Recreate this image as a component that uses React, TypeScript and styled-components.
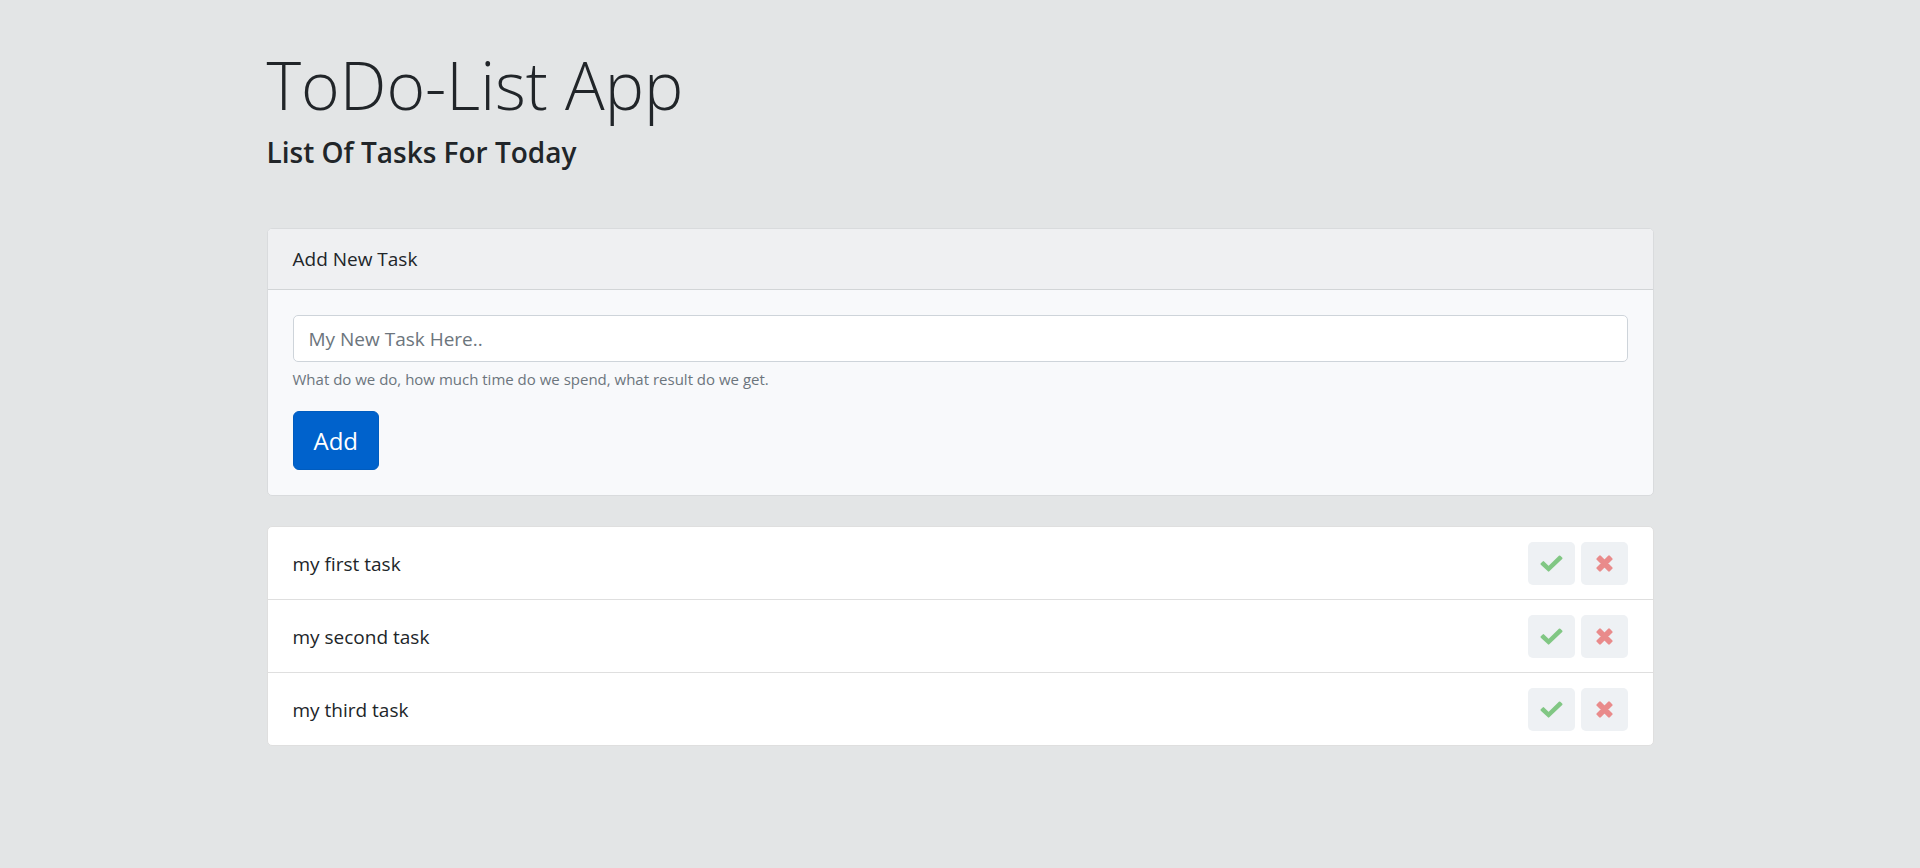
import React, { useState } from "react";
import styled, { createGlobalStyle } from "styled-components";

const GlobalStyle = createGlobalStyle`
  *, *::before, *::after { box-sizing: border-box; }
  body {
    margin: 0;
    background: #e3e5e6;
    color: #212529;
    font-family: "Segoe UI", "Open Sans", "Noto Sans", sans-serif;
    font-size: 19px;
    line-height: 30px;
  }
`;

const Container = styled.main`
  width: 100%;
  max-width: 1427px;
  margin: 0 auto;
  padding: 42px 20px;
`;

const Title = styled.h1`
  margin: 0 0 8px;
  font-size: 66px;
  font-weight: 300;
  line-height: 84px;
`;

const Subtitle = styled.h2`
  margin: 0 0 58px;
  font-size: 28px;
  font-weight: 600;
  line-height: 36px;
`;

const Card = styled.section`
  margin-bottom: 30px;
  background: #f8f9fb;
  border: 1px solid #d9dbdd;
  border-radius: 5px;
  overflow: hidden;
`;

const CardHeader = styled.header`
  padding: 15px 25px;
  background: #eff0f2;
  border-bottom: 1px solid #d2d5d7;
`;

const Form = styled.form`
  display: flex;
  flex-direction: column;
  align-items: flex-start;
  padding: 25px;
`;

const TaskInput = styled.input`
  width: 100%;
  height: 47px;
  padding: 0 15px;
  font: inherit;
  color: #495057;
  background: #fff;
  border: 1px solid #ced4da;
  border-radius: 5px;

  &::placeholder {
    color: #6c757d;
    opacity: 1;
  }
`;

const Hint = styled.small`
  margin: 5px 0 20px;
  color: #6c757d;
  font-size: 15px;
  line-height: 24px;
`;

const AddButton = styled.button`
  padding: 10px 20px;
  font: inherit;
  font-size: 24px;
  line-height: 37px;
  color: #fff;
  background: #0062cc;
  border: 1px solid #005cbf;
  border-radius: 6px;
  cursor: pointer;
`;

const TaskList = styled.ul`
  margin: 0;
  padding: 0;
  list-style: none;
  background: #fff;
  border: 1px solid #dfdfdf;
  border-radius: 5px;
`;

const TaskRow = styled.li`
  display: flex;
  align-items: center;
  gap: 6px;
  padding: 15px 25px 14px;

  & + & {
    border-top: 1px solid #dfdfdf;
  }
`;

const TaskText = styled.span<{ $done: boolean }>`
  flex: 1;
  text-decoration: ${(p) => (p.$done ? "line-through" : "none")};
`;

const IconButton = styled.button<{ $color: string }>`
  display: flex;
  align-items: center;
  justify-content: center;
  width: 47px;
  height: 43px;
  padding: 0;
  color: ${(p) => p.$color};
  background: #eef1f4;
  border: 0;
  border-radius: 5px;
  cursor: pointer;
`;

const CheckIcon = () => (
  <svg width="23" height="17" viewBox="0 0 23 17" fill="currentColor" stroke="currentColor" strokeWidth="2" strokeLinejoin="round" aria-hidden="true">
    <path d="M1.5 9 3.4 7.1 8.6 12.1 19.6 1.5 21.5 3.3 8.6 15.6Z" />
  </svg>
);

const CrossIcon = () => (
  <svg width="17" height="17" viewBox="0 0 17 17" fill="currentColor" stroke="currentColor" strokeWidth="2.4" strokeLinejoin="round" aria-hidden="true">
    <path d="M1.6 4 4 1.6 8.5 6.1 13 1.6 15.4 4 10.9 8.5 15.4 13 13 15.4 8.5 10.9 4 15.4 1.6 13 6.1 8.5Z" />
  </svg>
);

type Task = { id: number; text: string; done: boolean };

export default function App() {
  const [draft, setDraft] = useState("");
  const [tasks, setTasks] = useState<Task[]>([
    { id: 1, text: "my first task", done: false },
    { id: 2, text: "my second task", done: false },
    { id: 3, text: "my third task", done: false },
  ]);

  const add = (e: React.FormEvent) => {
    e.preventDefault();
    if (!draft.trim()) return;
    setTasks([...tasks, { id: Date.now(), text: draft.trim(), done: false }]);
    setDraft("");
  };

  return (
    <>
      <GlobalStyle />
      <Container>
        <Title>ToDo-List App</Title>
        <Subtitle>List Of Tasks For Today</Subtitle>
        <Card>
          <CardHeader>
            <label htmlFor="task">Add New Task</label>
          </CardHeader>
          <Form onSubmit={add}>
            <TaskInput
              id="task"
              type="text"
              placeholder="My New Task Here.."
              aria-describedby="task-hint"
              value={draft}
              onChange={(e) => setDraft(e.target.value)}
            />
            <Hint id="task-hint">What do we do, how much time do we spend, what result do we get.</Hint>
            <AddButton type="submit">Add</AddButton>
          </Form>
        </Card>
        <TaskList>
          {tasks.map((task) => (
            <TaskRow key={task.id}>
              <TaskText $done={task.done}>{task.text}</TaskText>
              <IconButton
                type="button"
                $color="#81c784"
                aria-label="Complete task"
                onClick={() => setTasks(tasks.map((t) => (t.id === task.id ? { ...t, done: !t.done } : t)))}
              >
                <CheckIcon />
              </IconButton>
              <IconButton
                type="button"
                $color="#e98b8b"
                aria-label="Delete task"
                onClick={() => setTasks(tasks.filter((t) => t.id !== task.id))}
              >
                <CrossIcon />
              </IconButton>
            </TaskRow>
          ))}
        </TaskList>
      </Container>
    </>
  );
}
